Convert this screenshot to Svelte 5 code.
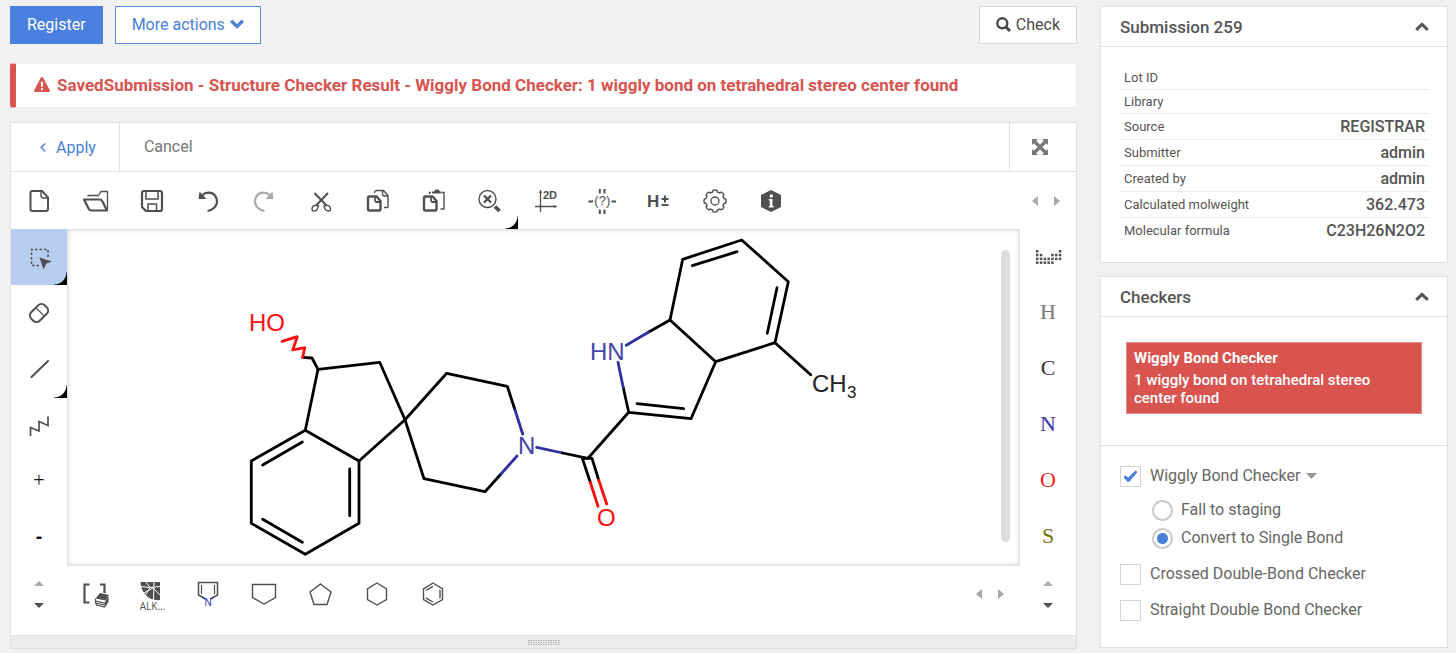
<script>
	let checkers = [
		{ id: "wiggly", name: "Wiggly Bond Checker", checked: true, options: ["Fall to staging", "Convert to Single Bond"] },
		{ id: "crossed", name: "Crossed Double-Bond Checker", checked: false, options: [] },
		{ id: "straight", name: "Straight Double Bond Checker", checked: false, options: [] }
	];
	let fix = "Convert to Single Bond";
	let showSubmission = true;
	let showCheckers = true;

	const details = [
		["Lot ID", ""],
		["Library", ""],
		["Source", "REGISTRAR"],
		["Submitter", "admin"],
		["Created by", "admin"],
		["Calculated molweight", "362.473"],
		["Molecular formula", "C23H26N2O2"]
	];

	const elements = [
		["H", "#777777"],
		["C", "#333333"],
		["N", "#3a3aa8"],
		["O", "#ff2020"],
		["S", "#77770c"]
	];

	// first and last row of dots in each column of the periodic table icon
	const periodic = [[0, 3], [1, 3], [2, 3], [2, 3], [1, 3], [1, 2], [0, 2]];

	function gear(teeth, inner, outer) {
		let points = [];
		for (let i = 0; i < teeth; i += 1) {
			const a = i * 2 * Math.PI / teeth;
			for (const [offset, r] of [[-0.25, inner], [-0.19, outer], [0, outer + 0.3], [0.19, outer], [0.25, inner]]) {
				points.push(`${12 + r * Math.sin(a + offset)} ${12 - r * Math.cos(a + offset)}`);
			}
		}
		return `M${points.join("L")}z`;
	}
</script>

<style>
	:global(body) {
		margin: 0;
		background: #f1f1f1;
		color: #555;
		font-family: Roboto, "Liberation Sans", sans-serif;
		font-size: 16px;
	}
	* {
		box-sizing: border-box;
	}
	button {
		margin: 0;
		padding: 0;
		border: 0;
		background: none;
		color: inherit;
		font: inherit;
		cursor: pointer;
	}
	svg {
		display: block;
		overflow: visible;
	}
	.page {
		display: flex;
		gap: 23px;
		padding: 6px 8px 5px 10px;
	}
	main {
		flex: 1;
		min-width: 0;
	}
	aside {
		width: 348px;
	}

	.actions {
		display: flex;
		gap: 12px;
		height: 38px;
	}
	.btn {
		display: flex;
		align-items: center;
		gap: 5px;
		padding: 0 16px 2px;
		border: 1px solid #d8d8d8;
		background: #fff;
	}
	.btn.primary {
		border-color: #4a80df;
		background: #4a80df;
		color: #fff;
	}
	.btn.outline {
		border-color: #5a8be2;
		color: #4a80d9;
	}
	.btn.check {
		margin-left: auto;
		color: #4a4a4a;
	}

	.alert {
		display: flex;
		align-items: center;
		gap: 7px;
		height: 45px;
		margin: 19px 0 14px;
		padding: 0 0 2px 18px;
		border: 1px solid #ececec;
		border-left: 6px solid #dc5450;
		border-radius: 3px;
		background: #fff;
		color: #d9534f;
		font-size: 17px;
		font-weight: 700;
	}

	.editor {
		border: 1px solid #e0e0e0;
		background: #fff;
	}
	.editor-head {
		display: flex;
		height: 49px;
		border-bottom: 1px solid #e0e0e0;
	}
	.apply {
		display: flex;
		align-items: center;
		gap: 10px;
		padding: 0 23px 0 29px;
		border-right: 1px solid #e0e0e0;
		color: #4a80d9;
	}
	.cancel {
		padding: 0 24px 2px;
		color: #777;
	}
	.expand {
		width: 67px;
		margin-left: auto;
		padding-left: 22px;
		border-left: 1px solid #e0e0e0;
		color: #777;
	}
	.toolbar {
		display: flex;
		height: 57px;
		color: #505050;
	}
	.tools {
		display: flex;
		flex: 0 1 788px;
	}
	.tools.rings {
		flex-basis: 394px;
	}
	.tools .tool {
		flex: 1;
	}
	.tool {
		position: relative;
		display: flex;
		align-items: center;
		justify-content: center;
	}
	.tool.selected {
		background: #b7cdf0;
	}
	.tool.more::after {
		content: "";
		position: absolute;
		right: 0;
		bottom: 0;
		width: 13px;
		height: 13px;
		background: radial-gradient(circle at top left, transparent 12px, #000 13px);
	}
	.disabled {
		color: #aaa;
	}
	.pager {
		display: flex;
		align-items: center;
		justify-content: center;
		gap: 16px;
		width: 60px;
		margin-left: auto;
		color: #a8a8a8;
	}
	.pager.vertical {
		flex-direction: column;
		gap: 17px;
		width: 56px;
		margin-left: 0;
	}
	.pager .on {
		color: #505050;
	}

	.work {
		display: grid;
		grid-template-columns: 56px 1fr 56px;
		height: 337px;
	}
	.side {
		display: grid;
		grid-template-rows: repeat(6, 1fr);
		color: #505050;
	}
	.charge {
		padding-bottom: 3px;
		color: #111;
		font-size: 20px;
	}
	.plus, .element {
		font-family: "Liberation Serif", serif;
	}
	.minus {
		font-family: "Liberation Sans", sans-serif;
		font-weight: 700;
	}
	.element {
		padding-bottom: 3px;
		font-size: 22px;
	}
	.canvas {
		position: relative;
		border: 1px solid #e2e2e2;
		box-shadow: inset 0 0 5px #d8d8d8;
	}
	.canvas svg {
		width: 100%;
		height: 100%;
	}
	.scroll {
		position: absolute;
		top: 20px;
		right: 9px;
		bottom: 23px;
		width: 9px;
		border-radius: 5px;
		background: #dcdcdc;
	}
	.bonds {
		fill: none;
		stroke: #000;
		stroke-width: 2.8;
		stroke-linecap: round;
		stroke-linejoin: round;
	}
	.bonds .nitrogen {
		stroke: #3030a0;
	}
	.bonds .oxygen {
		stroke: #ff0d0d;
	}
	.atoms {
		font-family: "Liberation Sans", sans-serif;
		font-size: 24px;
		fill: #222;
	}
	.atoms .nitrogen {
		fill: #4646a8;
	}
	.atoms .oxygen {
		fill: #ff0d0d;
	}
	.atoms .count {
		font-size: 17px;
	}
	.toolbar.bottom {
		height: 69px;
		padding-bottom: 13px;
	}
	.resize {
		display: flex;
		align-items: center;
		justify-content: center;
		height: 13px;
		border-top: 1px solid #e0e0e0;
		background: #ececec;
		color: #aaa;
	}
	.glyph {
		font-family: "Liberation Sans", sans-serif;
		font-weight: 700;
		fill: currentColor;
	}
	.glyph.thin {
		font-weight: 400;
	}
	.caption {
		font-family: "Open Sans", sans-serif;
		font-size: 10px;
		fill: currentColor;
	}
	.line {
		fill: none;
		stroke: currentColor;
	}
	.solid {
		fill: currentColor;
	}

	.panel {
		margin-bottom: 13px;
		border: 1px solid #e0e0e0;
		background: #fff;
	}
	.panel:last-child {
		margin-bottom: 0;
	}
	.panel-head {
		display: flex;
		align-items: center;
		justify-content: space-between;
		height: 40px;
		padding: 0 18px 0 19px;
		border-bottom: 1px solid #e0e0e0;
	}
	h2 {
		margin: 0;
		font-size: 17px;
		font-weight: 500;
	}
	.details {
		padding: 19px 18px 19px 19px;
	}
	table {
		width: 100%;
		border-collapse: collapse;
	}
	th, td {
		padding: 0 4px;
		border-bottom: 1px solid #ececec;
		line-height: 23px;
	}
	tr:last-child th, tr:last-child td {
		border-bottom: 0;
	}
	th {
		font-size: 13px;
		font-weight: 400;
		text-align: left;
	}
	td {
		font-weight: 500;
		text-align: right;
	}
	td span {
		display: block;
		line-height: 25px;
	}
	.result {
		padding: 25px 25px 31px;
		border-bottom: 1px solid #e0e0e0;
	}
	.result-box {
		padding: 6px 7px;
		border: 1px solid #e58b88;
		background: #d9534f;
		color: #fff;
		font-size: 15px;
		font-weight: 500;
		line-height: 18px;
	}
	.result-box strong {
		display: block;
		padding-bottom: 4px;
		font-weight: 700;
	}
	.options {
		display: flex;
		flex-direction: column;
		gap: 14px;
		padding: 19px 19px 26px;
	}
	label {
		display: flex;
		align-items: center;
		gap: 9px;
		line-height: 22px;
	}
	.row {
		display: flex;
		align-items: center;
		gap: 6px;
		color: #666;
	}
	.fixes {
		display: flex;
		flex-direction: column;
		gap: 6px;
		padding: 12px 0 0 32px;
		color: #666;
	}
	.fixes label {
		gap: 8px;
	}
	input {
		flex: none;
		width: 21px;
		height: 21px;
		margin: 0;
		border: 1px solid #d4d4d4;
		background: #fff;
		appearance: none;
	}
	input[type="checkbox"] {
		display: grid;
		place-items: center;
	}
	input[type="checkbox"]:checked::before {
		content: "";
		width: 14px;
		height: 12px;
		background: #4a80d9;
		clip-path: polygon(0 60%, 12% 44%, 33% 62%, 86% 4%, 100% 16%, 42% 98%, 28% 98%);
	}
	input[type="radio"] {
		border: 2px solid #c8c8c8;
		border-radius: 50%;
	}
	input[type="radio"]:checked {
		background: radial-gradient(circle, #4a80d9 5px, #fff 6px);
	}
</style>

<div class="page">
	<main>
		<div class="actions">
			<button class="btn primary">Register</button>
			<button class="btn outline">
				More actions
				<svg width="14" height="10" viewBox="0 0 14 10"><path class="line" stroke-width="3.4" d="M1.2 1.8L7 7.4l5.8-5.6" /></svg>
			</button>
			<button class="btn check">
				<svg width="15" height="15" viewBox="0 0 15 15" class="line">
					<circle cx="6.3" cy="6.3" r="5" stroke-width="2.4" />
					<path stroke-width="3" d="M10 10l4 4" />
				</svg>
				Check
			</button>
		</div>

		<div class="alert" role="alert">
			<svg width="16" height="15" viewBox="0 0 16 15">
				<path class="solid" d="M8 0q.8 0 1.2.8L15.8 13.2q.4 1.500-1 1.800H1.200q-1.400-.3-1-1.800L6.800.8Q7.200 0 8 0z" />
				<path fill="#fff" d="M6.800 4.800h2.400L8.900 9.800H7.100zM7 11h2v2H7z" />
			</svg>
			<span>SavedSubmission - Structure Checker Result - Wiggly Bond Checker: 1 wiggly bond on tetrahedral stereo center found</span>
		</div>

		<div class="editor">
			<div class="editor-head">
				<button class="apply">
					<svg width="6" height="9" viewBox="0 0 6 9"><path class="line" stroke-width="1.4" d="M5.300.6L1.200 4.500l4.100 3.900" /></svg>
					Apply
				</button>
				<button class="cancel">Cancel</button>
				<button class="expand" aria-label="Full screen">
					<svg width="16" height="16" viewBox="0 0 16 16">
						<path class="solid" d="M0 0h6L4.200 1.800 8 5.600l3.800-3.800L10 0h6v6l-1.800-1.800L10.400 8l3.800 3.800L16 10v6h-6l1.800-1.800L8 10.400l-3.800 3.800L6 16H0v-6l1.800 1.800L5.600 8 1.800 4.200 0 6z" />
					</svg>
				</button>
			</div>

			<div class="toolbar">
				<div class="tools">
					<button class="tool" aria-label="New">
						<svg width="24" height="24" class="line">
							<path stroke-width="2" d="M3.5 4q0-2 2-2h9.500l6 6.500V20q0 2-2 2H5.500q-2 0-2-2z" />
							<path stroke-width="1.4" d="M14 2.500v4q0 2.500 2.500 2.500H21" />
						</svg>
					</button>
					<button class="tool" aria-label="Open">
						<svg width="24" height="24" class="line">
							<path stroke-width="1.3" d="M4.500 7.500q.5-1 2-1h9l2.500-4h6.500V21" />
							<path stroke-width="2.2" stroke-linejoin="round" d="M1 10.500h15.500q2 0 2.700 1.500l4.800 9.500H8.500q-2 0-2.700-1.500z" />
						</svg>
					</button>
					<button class="tool" aria-label="Save">
						<svg width="24" height="24" class="line">
							<path stroke-width="2.2" d="M2 4q0-2 2-2h16q2 0 2 2v16q0 2-2 2H6l-4-4z" />
							<path stroke-width="1.5" d="M6 2.500V10h12V2.500M8 22v-7h8.500v7" />
						</svg>
					</button>
					<button class="tool" aria-label="Undo">
						<svg width="24" height="24">
							<path class="line" stroke-width="2.2" d="M6 6.500C10 2.500 16 3 19 6.500c3 4 2.500 9-.5 12-2 2-4 3-7 3.500" />
							<path class="solid" d="M3.500 2.500L2.500 10h8z" />
						</svg>
					</button>
					<button class="tool disabled" aria-label="Redo">
						<svg width="24" height="24">
							<path class="line" stroke-width="2.2" d="M18 6.500C14 2.500 8 3 5 6.500c-3 4-2.500 9 .5 12 2 2 4 3 7 3.500" />
							<path class="solid" d="M20.500 2.500L21.500 10h-8z" />
						</svg>
					</button>
					<button class="tool" aria-label="Cut">
						<svg width="24" height="24" class="line">
							<path stroke-width="2" d="M5.500 4l12 12.500M19 4L7 16.500" />
							<path stroke-width="1.4" d="M7 16.500c-2-.5-4 1-4 3.500s4 3 5.500 0l1-3zM17.500 16.500c2-.5 4 1 4 3.500s-4 3-5.500 0l-1-3z" />
						</svg>
					</button>
					<button class="tool" aria-label="Copy">
						<svg width="24" height="24" class="line">
							<path stroke-width="1.4" d="M9.500 4q0-2.500 2.500-2.500h6.500l4.500 5v11q0 1-1 1H19M17.500 1.500V5q0 2 2 2h3" />
							<path stroke-width="2.4" d="M3 9q0-1.500 1.500-1.500h7l4 4.500V20q0 1.500-1.500 1.500H4.500Q3 21.500 3 20z" />
							<path stroke-width="1.8" d="M10 8v3.500q0 1.500 1.500 1.500H15" />
						</svg>
					</button>
					<button class="tool" aria-label="Paste">
						<svg width="24" height="24" class="line">
							<path class="solid" stroke="none" d="M11 4.500V2.500h2L14.500.5h3L19 2.500h1.500v2z" />
							<path stroke-width="1.4" d="M8.500 5V3.500H10M21 3.500h2v16.500H19.500" />
							<path stroke-width="2.4" d="M3 9q0-1.500 1.500-1.500h7l4 4.500V20q0 1.500-1.500 1.500H4.500Q3 21.500 3 20z" />
							<path stroke-width="1.8" d="M10 8v3.500q0 1.500 1.500 1.500H15" />
						</svg>
					</button>
					<button class="tool more" aria-label="Zoom to fit">
						<svg width="24" height="24" class="line">
							<circle cx="10.5" cy="10" r="8.5" stroke-width="1.4" />
							<path stroke-width="2.4" d="M7 6.500l7 7M14 6.500l-7 7" />
							<path stroke-width="3.8" d="M18 17.500l4.500 4.500" />
						</svg>
					</button>
					<button class="tool" aria-label="Clean 2D">
						<svg width="24" height="24">
							<path class="line" stroke-width="1.3" d="M6.500 2v21M1 17.500h20" />
							<path class="solid" d="M6.500.5l1.500 3.500h-3zM23.500 17.500l-3.500 1.500v-3z" />
							<text class="glyph" x="9" y="10" font-size="11">2D</text>
						</svg>
					</button>
					<button class="tool" aria-label="Check structure">
						<svg width="24" height="24">
							<path class="line" stroke-width="2" d="M-1.500 12.500h4.500M21.500 12.500h4.500M9.800 0v4.500M14.500 0v4.500M9.800 20.500v4.500M14.500 20.500v4.500" />
							<text class="glyph thin" x="12.3" y="16" font-size="13" text-anchor="middle">(?)</text>
						</svg>
					</button>
					<button class="tool" aria-label="Add or remove hydrogens">
						<svg width="24" height="24">
							<text class="glyph" x="1" y="18" font-size="17">H</text>
							<path class="line" stroke-width="2" d="M15.500 10h7M19 6.500v7M15.500 16h7" />
						</svg>
					</button>
					<button class="tool" aria-label="Settings">
						<svg width="24" height="24" class="line">
							<path stroke-width="1.4" d={gear(8, 9.3, 10.8)} />
							<circle cx="12" cy="12" r="4" stroke-width="1.3" />
						</svg>
					</button>
					<button class="tool" aria-label="About">
						<svg width="24" height="24">
							<path class="solid" d="M12 1l10 5v12l-10 5-10-5V6z" />
							<path fill="#fff" d="M10.800 5.500h3v3h-3zM9.800 10h3.700v7h1v1.500H9.800V17h1v-5.500h-1z" />
						</svg>
					</button>
				</div>
				<div class="pager">
					<button aria-label="Previous tools"><svg width="6" height="10"><path class="solid" d="M6 0v10L0 5z" /></svg></button>
					<button aria-label="Next tools"><svg width="6" height="10"><path class="solid" d="M0 0v10l6-5z" /></svg></button>
				</div>
			</div>

			<div class="work">
				<div class="side">
					<button class="tool more selected" aria-label="Select">
						<svg width="24" height="24">
							<path class="line" stroke-width="1.5" stroke-dasharray="2.5 2" d="M12 20.500H4.500V4.500h16.500V12" />
							<path class="solid" d="M12.500 12.500l12.500 4-5.500 2-3 6z" />
						</svg>
					</button>
					<button class="tool" aria-label="Erase">
						<svg width="24" height="24" class="line">
							<g transform="rotate(-45 12 12)">
								<rect x="2.5" y="6" width="19" height="12" rx="4.5" stroke-width="2" />
								<path stroke-width="1.2" d="M13.500 6v12" />
							</g>
						</svg>
					</button>
					<button class="tool more" aria-label="Bond">
						<svg width="24" height="24" class="line"><path stroke-width="2" stroke-linecap="round" d="M4.500 20L21 4" /></svg>
					</button>
					<button class="tool" aria-label="Chain">
						<svg width="24" height="24" class="line"><path stroke-width="1.7" d="M3.500 22v-8.500l8.500 3.500V7.500l9 4V2.500" /></svg>
					</button>
					<button class="tool charge plus">+</button>
					<button class="tool charge minus">-</button>
				</div>

				<div class="canvas">
					<svg viewBox="68 230 951 335">
						<g class="bonds">
							<path d="M251.300 461L305.300 430.300 359 461V523.300L305.300 554.300 251.300 523.300zM262.700 465L302.300 442M349.700 469V515.700M262.700 519.300L302.300 542.300" />
							<path d="M305.300 430.300L318 369.300 379.700 362.300 405 419.700 359 461" />
							<path d="M318 369.300L312 358 302.700 357.300" />
							<path class="oxygen" d="M302.700 357.300L304.700 347.700 292.700 350 297.300 336.700 282 341.300" />
							<path d="M515 410L507.300 386.300 446.700 373.300 405 419.700 424 478.700 485 491.700 500.700 474.300" />
							<path class="nitrogen" d="M515 410L522.700 434M500.700 474.300L517 456M536.700 447.300L562.700 453" />
							<path d="M562.700 453L588 458.300 628.700 412.300 691 418.700 715.700 361.700 670 320 648.300 332.300M637 403.700L683.700 408.700M628.700 412.300L623.300 387.700" />
							<path class="nitrogen" d="M648.300 332.300L626.300 345.300M623.300 387.700L618 362.300" />
							<path d="M590.300 482.300L582.300 458.300H592L598.700 480" />
							<path class="oxygen" d="M590.300 482.300L598 506.300M598.700 480L606.700 504" />
							<path d="M670 320L682.700 259.300 741.700 240 788.300 281.700 775 342.700 715.700 361.700M692.300 265.700L737 251.700M777 287.700L767.300 333.300M775 342.700L810.700 374.700" />
						</g>
						<g class="atoms">
							<text class="oxygen" x="249" y="331">HO</text>
							<text class="nitrogen" x="518" y="454">N</text>
							<text class="nitrogen" x="590" y="360">HN</text>
							<text class="oxygen" x="597" y="526">O</text>
							<text x="812" y="392">CH</text>
							<text class="count" x="847" y="398">3</text>
						</g>
					</svg>
					<div class="scroll"></div>
				</div>

				<div class="side">
					<button class="tool" aria-label="Periodic table">
						<svg width="26" height="16">
							{#each periodic as [from, to], column}
								{#each [0, 1, 2, 3] as row}
									{#if row >= from && row <= to}
										<rect class="solid" x={1 + column * 3.8} y={1 + row * 3.8} width="2.5" height="2.5" />
									{/if}
								{/each}
							{/each}
						</svg>
					</button>
					{#each elements as [symbol, color]}
						<button class="tool element" style:color={color}>{symbol}</button>
					{/each}
				</div>
			</div>

			<div class="toolbar bottom">
				<div class="pager vertical">
					<button aria-label="Scroll up"><svg width="10" height="5"><path class="solid" d="M0 5h10L5 0z" /></svg></button>
					<button class="on" aria-label="Scroll down"><svg width="10" height="5"><path class="solid" d="M0 0h10L5 5z" /></svg></button>
				</div>
				<div class="tools rings">
					<button class="tool" aria-label="Templates">
						<svg width="24" height="24">
							<path class="line" stroke-width="2.2" d="M6.500 2.500H1.500V20.500H6.500M17 2.500h4.500V11" />
							<path class="solid" d="M17 11l9 2-3.500 5.500-10-2z" />
							<path class="line" stroke-width="1.2" d="M12.500 16.500v2.500l9.500 2 3.500-6M12.500 19v2l9.500 2 3.500-6M13 21.500l.5 1.500 8 2 4-6" />
						</svg>
					</button>
					<button class="tool" aria-label="Alkaloids">
						<svg width="24" height="24">
							<path class="solid" d="M1.500 0h19.500v18q-10 1-15-6Q2 8 1.500 0z" />
							<path fill="none" stroke="#fff" d="M1.500 4.500l9.500 1 10-1M15 0l-.5 18M4 11.500l10-5.500 7 7M7 0l4 5.500-4 7" />
							<text class="caption" x="13.5" y="28" text-anchor="middle">ALK...</text>
						</svg>
					</button>
					<button class="tool" aria-label="Pyrrole">
						<svg width="24" height="24">
							<path class="line" stroke-width="1.5" d="M6 15L2.500 13V.5h19V13L18 15" />
							<path class="line" stroke-width="1.2" d="M5.500 12V3M18.500 12V3" />
							<path fill="none" stroke="#3030b0" stroke-width="1.5" d="M6 15l3.500 2M18 15l-3.500 2" />
							<text x="12" y="24" text-anchor="middle" font-size="10" font-family="Liberation Sans" fill="#3030b0">N</text>
						</svg>
					</button>
					<button class="tool" aria-label="Cyclopentane">
						<svg width="24" height="24" class="line"><path stroke-width="1.4" d="M.5 2.500h23V15.500L12 22 .5 15.500z" /></svg>
					</button>
					<button class="tool" aria-label="Cyclopentane, point up">
						<svg width="24" height="24" class="line"><path stroke-width="1.4" d="M12.500 2l10.500 8-4 12.500H6L2 10z" /></svg>
					</button>
					<button class="tool" aria-label="Cyclohexane">
						<svg width="24" height="24" class="line"><path stroke-width="1.4" d="M12 1l9.500 5.800v10.700L12 23 2.500 17.500V6.800z" /></svg>
					</button>
					<button class="tool" aria-label="Benzene">
						<svg width="24" height="24" class="line">
							<path stroke-width="1.4" d="M12 1l9.500 5.800v10.700L12 23 2.500 17.500V6.800z" />
							<path stroke-width="1.4" d="M4.800 8.500l7.200-4.200M19 8v8.500M12 20L4.800 15.800" />
						</svg>
					</button>
				</div>
				<div class="pager">
					<button aria-label="Previous rings"><svg width="6" height="10"><path class="solid" d="M6 0v10L0 5z" /></svg></button>
					<button aria-label="Next rings"><svg width="6" height="10"><path class="solid" d="M0 0v10l6-5z" /></svg></button>
				</div>
				<div class="pager vertical">
					<button aria-label="Scroll elements up"><svg width="10" height="5"><path class="solid" d="M0 5h10L5 0z" /></svg></button>
					<button class="on" aria-label="Scroll elements down"><svg width="10" height="5"><path class="solid" d="M0 0h10L5 5z" /></svg></button>
				</div>
			</div>
			<div class="resize">
				<svg width="32" height="5"><path class="line" stroke-width="1" stroke-dasharray="1.5 1" d="M0 .5h32M0 2.500h32M0 4.500h32" /></svg>
			</div>
		</div>
	</main>

	<aside>
		<section class="panel">
			<div class="panel-head">
				<h2>Submission 259</h2>
				<button aria-label="Toggle submission" on:click={() => showSubmission = !showSubmission}>
					<svg width="14" height="9"><path class="line" stroke-width="3" d="M1.200 7.800L7 2.400l5.800 5.400" /></svg>
				</button>
			</div>
			{#if showSubmission}
				<div class="details">
					<table>
						<tbody>
							{#each details as [label, value]}
								<tr>
									<th scope="row">{label}</th>
									<td>{#if value}<span>{value}</span>{/if}</td>
								</tr>
							{/each}
						</tbody>
					</table>
				</div>
			{/if}
		</section>

		<section class="panel">
			<div class="panel-head">
				<h2>Checkers</h2>
				<button aria-label="Toggle checkers" on:click={() => showCheckers = !showCheckers}>
					<svg width="14" height="9"><path class="line" stroke-width="3" d="M1.200 7.800L7 2.400l5.800 5.400" /></svg>
				</button>
			</div>
			{#if showCheckers}
				<div class="result">
					<div class="result-box">
						<strong>Wiggly Bond Checker</strong>
						1 wiggly bond on tetrahedral stereo center found
					</div>
				</div>
				<div class="options">
					{#each checkers as checker}
						<div>
							<div class="row">
								<label for={checker.id}>
									<input type="checkbox" id={checker.id} bind:checked={checker.checked}>
									{checker.name}
								</label>
								{#if checker.options.length}
									<svg width="11" height="6"><path fill="#999" d="M0 0h11L5.500 6z" /></svg>
								{/if}
							</div>
							{#if checker.options.length}
								<div class="fixes">
									{#each checker.options as option}
										<label>
											<input type="radio" name="fix" value={option} bind:group={fix}>
											{option}
										</label>
									{/each}
								</div>
							{/if}
						</div>
					{/each}
				</div>
			{/if}
		</section>
	</aside>
</div>
